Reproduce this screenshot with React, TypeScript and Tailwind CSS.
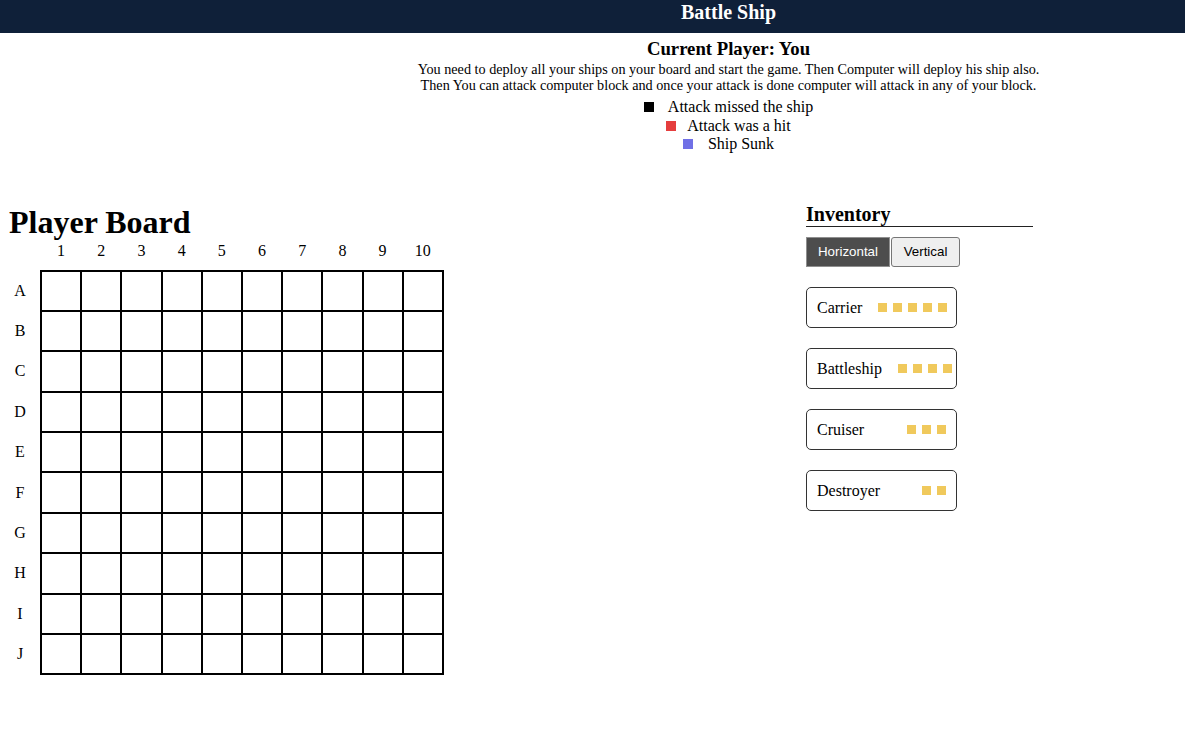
import React from "react";

const cols = [1, 2, 3, 4, 5, 6, 7, 8, 9, 10];
const rows = ["A", "B", "C", "D", "E", "F", "G", "H", "I", "J"];

const ships = [
  { name: "Carrier", size: 5 },
  { name: "Battleship", size: 4 },
  { name: "Cruiser", size: 3 },
  { name: "Destroyer", size: 2 },
];

export default function App() {
  return (
    <div className="min-h-[737px] bg-white text-black font-['Liberation_Serif','Times_New_Roman',serif]">
      <header className="h-[33px] bg-[#0f2039] pl-[272px] pt-[1px] text-center">
        <span className="text-[20px] leading-[23px] font-bold text-white">Battle Ship</span>
      </header>

      <div className="pl-[272px] text-center">
        <h3 className="mt-[5px] text-[18.72px] leading-[22px] font-bold">Current Player: You</h3>
        <p className="mt-[1px] text-[14.2px] leading-[16px] whitespace-nowrap">
          You need to deploy all your ships on your board and start the game. Then Computer will deploy his ship also.
          <br />
          Then You can attack computer block and once your attack is done computer will attack in any of your block.
        </p>
        <div className="mt-[5px] text-[16px] leading-[18.5px]">
          <div className="flex items-center justify-center">
            <span className="w-[10px] h-[10px] bg-black mr-[14px]" />
            <span>Attack missed the ship</span>
          </div>
          <div className="flex items-center justify-center">
            <span className="w-[10px] h-[10px] bg-[#e53e3e] mr-[11px]" />
            <span>Attack was a hit</span>
          </div>
          <div className="flex items-center justify-center">
            <span className="w-[10px] h-[10px] bg-[#7070e6] mr-[15px]" />
            <span>Ship Sunk</span>
          </div>
        </div>
      </div>

      <div className="mt-[50px] flex items-start">
        <div className="w-[806px] shrink-0">
          <h1 className="pl-[9px] text-[32px] leading-[36px] font-bold">Player Board</h1>
          <div className="flex text-[16px] leading-[20px] mt-[1px]">
            <div className="w-[40px]" />
            <div className="grid grid-cols-[repeat(10,38.2px)] gap-x-[2px] px-[2px]">
              {cols.map((c) => (
                <div key={c} className="text-center">
                  {c}
                </div>
              ))}
            </div>
          </div>
          <div className="flex mt-[9px]">
            <div className="w-[40px] pt-[2px] flex flex-col text-[16px] leading-[18px]">
              {rows.map((r) => (
                <div key={r} className="h-[40.4px] flex items-center justify-center pb-[2px]">
                  {r}
                </div>
              ))}
            </div>
            <div className="grid grid-cols-[repeat(10,38.2px)] grid-rows-[repeat(10,38.4px)] gap-[2px] p-[2px] bg-black">
              {rows.map((r) =>
                cols.map((c) => <div key={r + c} className="bg-white" />)
              )}
            </div>
          </div>
        </div>

        <div className="w-[227px] shrink-0 -mt-[1px]">
          <h2 className="h-[24px] text-[20px] leading-[23px] font-bold border-b border-[#222]">Inventory</h2>
          <div className="mt-[10px] flex items-center font-['Liberation_Sans',Arial,sans-serif] text-[13.33px]">
            <button className="w-[84px] h-[30px] bg-[#4d4d4d] text-white border border-[#8f8f8f]">
              Horizontal
            </button>
            <button className="ml-[1px] w-[69px] h-[30px] bg-[#efefef] text-black border border-[#767676] rounded-[3px]">
              Vertical
            </button>
          </div>
          <div className="mt-[20px] flex flex-col gap-[20px]">
            {ships.map((s) => (
              <div
                key={s.name}
                className="w-[151px] h-[41px] border border-[#333] rounded-[5px] flex items-center justify-between gap-4 pl-[10px] pr-[10px] pt-[1px] text-[16px] leading-[18px]"
              >
                <span className="shrink-0">{s.name}</span>
                <div className="flex gap-[6px] shrink-0">
                  {Array.from({ length: s.size }).map((_, i) => (
                    <span key={i} className="w-[9px] h-[9px] bg-[#f0c95c]" />
                  ))}
                </div>
              </div>
            ))}
          </div>
        </div>
      </div>
    </div>
  );
}
